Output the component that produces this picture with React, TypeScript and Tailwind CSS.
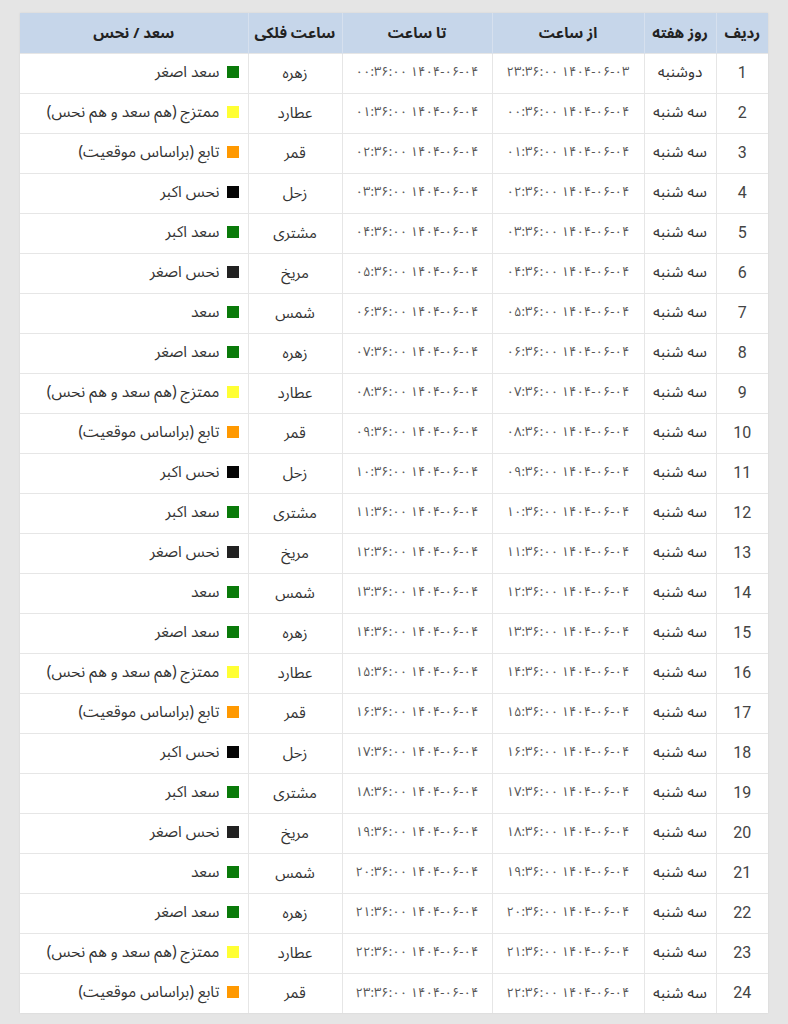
const toFa = (s: string) => s.replace(/\d/g, (d) => "۰۱۲۳۴۵۶۷۸۹"[Number(d)]);

const planets = ["زهره", "عطارد", "قمر", "زحل", "مشتری", "مریخ", "شمس"];

const status: Record<string, { label: string; color: string }> = {
  زهره: { label: "سعد اصغر", color: "bg-[#0a7a0a]" },
  عطارد: { label: "ممتزج (هم سعد و هم نحس)", color: "bg-[#ffff33]" },
  قمر: { label: "تابع (براساس موقعیت)", color: "bg-[#ff9900]" },
  زحل: { label: "نحس اکبر", color: "bg-[#050505]" },
  مشتری: { label: "سعد اکبر", color: "bg-[#0a7a0a]" },
  مریخ: { label: "نحس اصغر", color: "bg-[#222222]" },
  شمس: { label: "سعد", color: "bg-[#0a7a0a]" },
};

const pad = (n: number) => String(n).padStart(2, "0");

const rows = Array.from({ length: 24 }, (_, i) => {
  const fromH = (i + 23) % 24;
  const fromDay = i === 0 ? "03" : "04";
  return {
    n: i + 1,
    day: i === 0 ? "دوشنبه" : "سه شنبه",
    from: toFa(`1404-06-${fromDay} ${pad(fromH)}:36:00`),
    to: toFa(`1404-06-04 ${pad(i)}:36:00`),
    planet: planets[i % 7],
  };
});

const th = "border-r border-[#d6e0ee] first:border-r-0 font-bold text-[15px] text-[#222] text-center";
const td = "border-r border-t border-[#e6e6e6] first:border-r-0 text-center";

export default function App() {
  return (
    <div
      className="min-h-[1024px] w-[788px] bg-[#e5e5e5] pt-[13px] pl-[20px]"
      style={{ fontFamily: '"Noto Sans Arabic", "DejaVu Sans", sans-serif' }}
    >
      <table dir="rtl" className="w-[748px] table-fixed border-collapse bg-white shadow-[0_0_2px_rgba(0,0,0,0.08)]">
        <colgroup>
          <col className="w-[52px]" />
          <col className="w-[72px]" />
          <col className="w-[152px]" />
          <col className="w-[150px]" />
          <col className="w-[94px]" />
          <col className="w-[228px]" />
        </colgroup>
        <thead>
          <tr className="h-[40px] bg-[#c6d6ea]">
            <th className={th}>ردیف</th>
            <th className={th}>روز هفته</th>
            <th className={th}>از ساعت</th>
            <th className={th}>تا ساعت</th>
            <th className={th}>ساعت فلکی</th>
            <th className={th}>سعد / نحس</th>
          </tr>
        </thead>
        <tbody>
          {rows.map((r) => {
            const s = status[r.planet];
            return (
              <tr key={r.n} className="h-[40px] text-[#333]">
                <td className={`${td} text-[16px] font-['Roboto'] text-[#444]`}>{r.n}</td>
                <td className={`${td} text-[15.5px]`}>{r.day}</td>
                <td className={`${td} text-[13px] text-[#555]`}>{r.from}</td>
                <td className={`${td} text-[13px] text-[#555]`}>{r.to}</td>
                <td className={`${td} text-[15px]`}>{r.planet}</td>
                <td className={`${td} text-right pr-[9px] text-[15.5px]`}>
                  <span className="inline-flex items-center gap-[7px]">
                    <span className={`inline-block h-[12px] w-[12px] ${s.color}`} />
                    <span>{s.label}</span>
                  </span>
                </td>
              </tr>
            );
          })}
        </tbody>
      </table>
    </div>
  );
}
